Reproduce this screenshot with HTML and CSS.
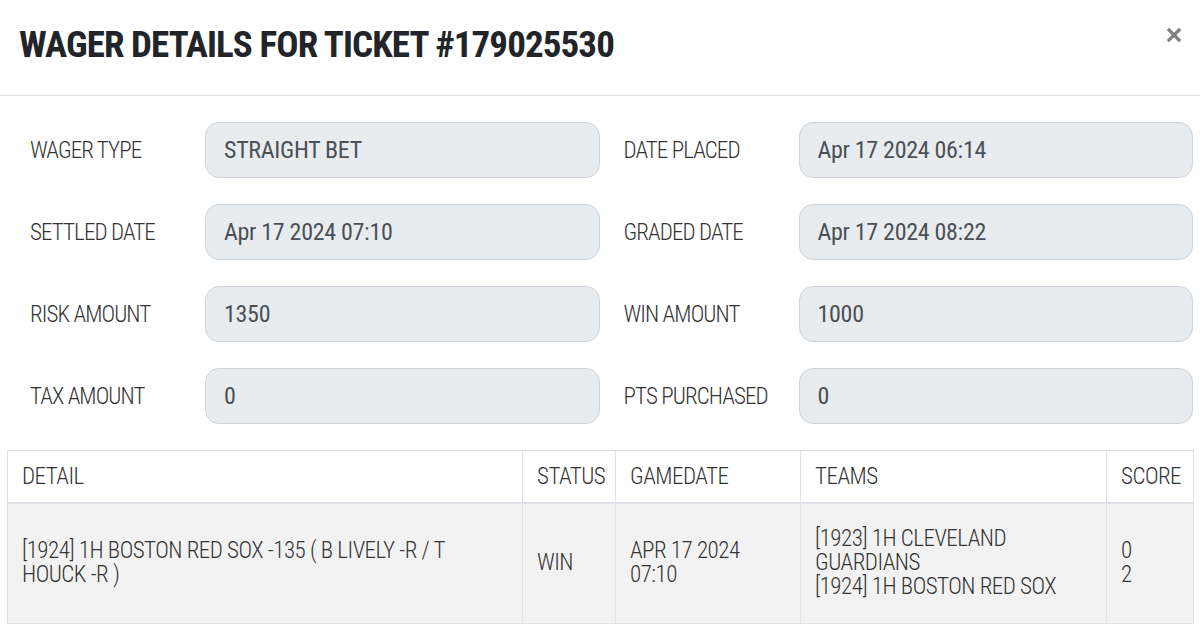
FILE: index.html
```html
<!DOCTYPE html>
<html>
<head>
<meta charset="utf-8">
<link rel="stylesheet" href="styles.css">
</head>
<body>
<div class="modal">
  <div class="modal-header">
    <h1 class="title">WAGER DETAILS FOR TICKET #179025530</h1>
    <button class="close" aria-label="Close">
      <svg width="14" height="14" viewBox="0 0 14 14"><path d="M2 2L12 12M12 2L2 12" stroke="#808080" stroke-width="3.2" stroke-linecap="square"/></svg>
    </button>
  </div>
  <div class="modal-body">
    <div class="form">
      <div class="field"><span class="label">WAGER TYPE</span><div class="input">STRAIGHT BET</div></div>
      <div class="field"><span class="label">DATE PLACED</span><div class="input">Apr 17 2024 06:14</div></div>
      <div class="field"><span class="label">SETTLED DATE</span><div class="input">Apr 17 2024 07:10</div></div>
      <div class="field"><span class="label">GRADED DATE</span><div class="input">Apr 17 2024 08:22</div></div>
      <div class="field"><span class="label">RISK AMOUNT</span><div class="input">1350</div></div>
      <div class="field"><span class="label">WIN AMOUNT</span><div class="input">1000</div></div>
      <div class="field"><span class="label">TAX AMOUNT</span><div class="input">0</div></div>
      <div class="field"><span class="label">PTS PURCHASED</span><div class="input">0</div></div>
    </div>
    <table class="details">
      <thead>
        <tr>
          <th class="c-detail">DETAIL</th>
          <th class="c-status">STATUS</th>
          <th class="c-date">GAMEDATE</th>
          <th class="c-teams">TEAMS</th>
          <th class="c-score">SCORE</th>
        </tr>
      </thead>
      <tbody>
        <tr>
          <td>[1924] 1H BOSTON RED SOX -135 ( B LIVELY -R / T HOUCK -R )</td>
          <td>WIN</td>
          <td>APR 17 2024 07:10</td>
          <td>[1923] 1H CLEVELAND GUARDIANS<br>[1924] 1H BOSTON RED SOX</td>
          <td>0<br>2</td>
        </tr>
      </tbody>
    </table>
  </div>
</div>
</body>
</html>
```
FILE: styles.css
```css
* { box-sizing: border-box; }
html, body { margin: 0; padding: 0; background: #fff; }
body {
  font-family: Roboto, "Roboto Condensed", "Liberation Sans", sans-serif;
  font-stretch: 75%;
  color: #333;
  width: 1200px;
  height: 637px;
  overflow: hidden;
}
.modal { width: 1200px; }
.modal-header {
  height: 96px;
  border-bottom: 1px solid #dee2e6;
  display: flex;
  align-items: flex-start;
  justify-content: space-between;
  padding: 25px 19px 0 19px;
}
.title {
  margin: 0;
  font-size: 37px;
  line-height: 40px;
  font-weight: 700;
  letter-spacing: -0.9px;
  color: #212529;
}
.close {
  margin-top: 3px;
  background: none;
  border: 0;
  padding: 0;
  width: 14px;
  height: 14px;
  display: flex;
}
.modal-body { padding: 26px 7px 0 7px; }
.form {
  display: grid;
  grid-template-columns: 1fr 1fr;
  column-gap: 24px;
  row-gap: 26px;
  padding: 0 0 0 23px;
}
.field {
  display: grid;
  grid-template-columns: 175px 1fr;
  align-items: center;
}
.label {
  font-size: 23px;
  font-weight: 300;
  letter-spacing: -0.9px;
  color: #333;
}
.input {
  height: 56px;
  background: #e9ecef;
  border: 1px solid #ced4da;
  border-radius: 14px;
  padding: 0 18px;
  display: flex;
  align-items: center;
  font-size: 24px;
  font-weight: 400;
  letter-spacing: -0.3px;
  color: #495057;
}
.details {
  margin-top: 26px;
  width: 1186px;
  border-collapse: collapse;
  table-layout: fixed;
  font-size: 23px;
  font-weight: 300;
  letter-spacing: -0.5px;
  color: #333;
}
.details th, .details td {
  border: 1px solid #dee2e6;
  text-align: left;
  padding: 0 14px;
  vertical-align: middle;
}
.details th {
  height: 52px;
  font-weight: 300;
  background: #fff;
  border-bottom: 2px solid #dee2e6;
}
.details td {
  height: 121px;
  background: #f2f2f2;
  line-height: 24px;
}
.c-detail { width: 515px; }
.c-status { width: 93px; }
.c-date { width: 185px; }
.c-teams { width: 306px; }
.c-score { width: 87px; }
```
